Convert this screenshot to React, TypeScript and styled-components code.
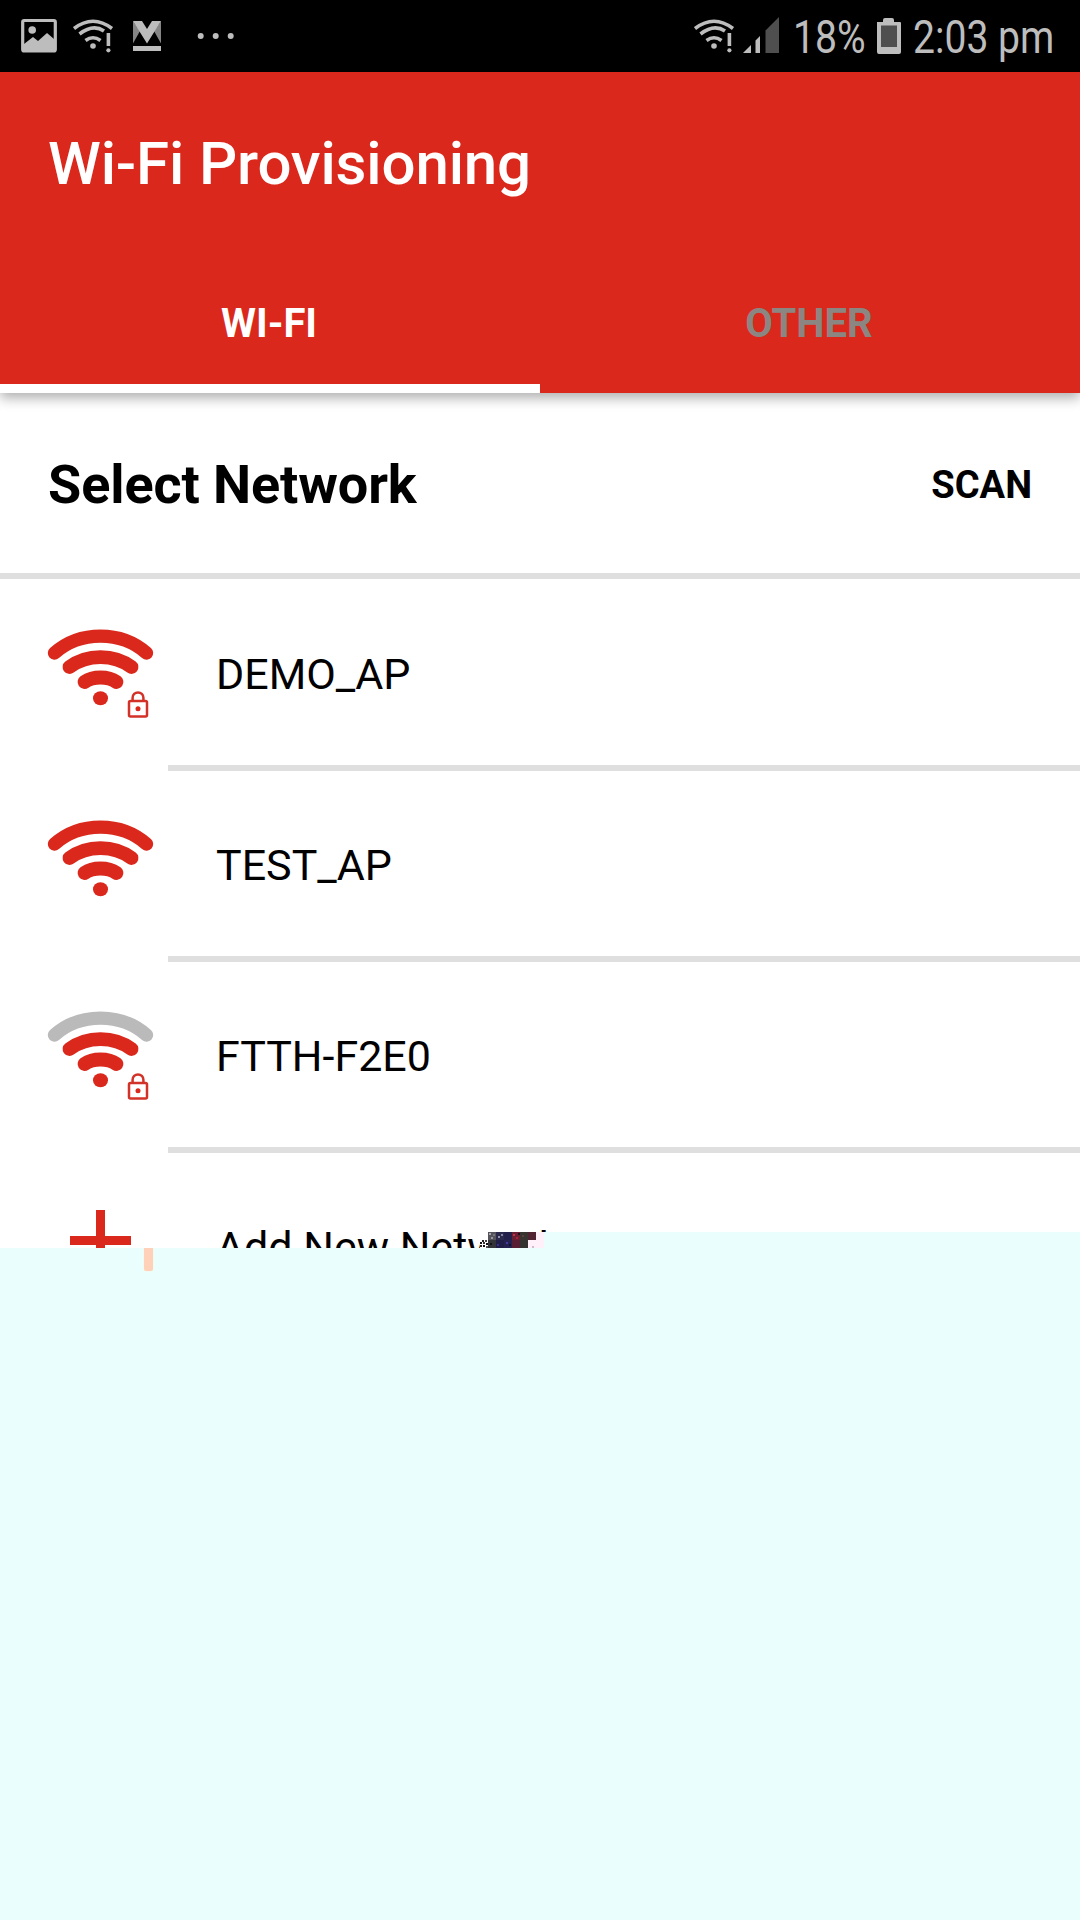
import React from "react";
import styled, { createGlobalStyle } from "styled-components";

const RED = "#da291c";
const MINT = "#eafffd";
const GREY = "#bdbdbd";

const GlobalStyle = createGlobalStyle`
  *, *::before, *::after { box-sizing: border-box; }
  body {
    margin: 0;
    background: ${MINT};
    font-family: Roboto, "Liberation Sans", sans-serif;
  }
`;

const Screen = styled.div`
  width: 1080px;
  height: 1920px;
  overflow: hidden;
  background: ${MINT};
`;

const StatusBar = styled.div`
  height: 72px;
  background: #000;
  display: flex;
  justify-content: space-between;
  color: ${GREY};
`;

const StatusGroup = styled.div`
  display: flex;
  svg { display: block; flex: none; }
`;

const StatusText = styled.span<{ $width: number; $squeeze: number }>`
  display: block;
  width: ${(p) => p.$width}px;
  font-size: 46px;
  line-height: 75px;
  white-space: nowrap;
  transform: scaleX(${(p) => p.$squeeze});
  transform-origin: 0 50%;
`;

const Header = styled.header`
  position: relative;
  z-index: 1;
  height: 321px;
  background: ${RED};
  box-shadow: 0 5px 12px rgba(0, 0, 0, 0.32);
  display: flex;
  flex-direction: column;
`;

const Title = styled.h1`
  margin: 0;
  height: 177px;
  padding: 0 48px;
  font-size: 60px;
  line-height: 183px;
  letter-spacing: -0.14px;
  font-weight: 500;
  color: #fff;
`;

const Tabs = styled.nav`
  flex: 1;
  display: flex;
`;

const Tab = styled.div<{ $active?: boolean }>`
  flex: none;
  width: 50%;
  text-align: center;
  font-size: 40px;
  line-height: 150px;
  height: 144px;
  padding-right: 2px;
  font-weight: 700;
  color: ${(p) => (p.$active ? "#fff" : "#8c8683")};
  border-bottom: 9px solid ${(p) => (p.$active ? "#fff" : "transparent")};
`;

const SectionHead = styled.div`
  height: 186px;
  padding: 4px 48px 0;
  display: flex;
  justify-content: space-between;
  align-items: center;
  background: #fff;
  border-bottom: 6px solid #dfdfdf;
`;

const SectionTitle = styled.h2`
  margin: 0;
  font-size: 54px;
  line-height: 64px;
  letter-spacing: -0.1px;
  font-weight: 700;
  color: #000;
`;

const ScanButton = styled.button`
  border: 0;
  padding: 0;
  background: none;
  font: 700 38.1px/46px Roboto, sans-serif;
  color: #000;
`;

const List = styled.div`
  position: relative;
  height: 669px;
  overflow: hidden;
  background: #fff;
`;

const Row = styled.div<{ $first?: boolean }>`
  height: ${(p) => (p.$first ? 192 : 191)}px;
  line-height: ${(p) => (p.$first ? 190 : 188)}px;
  display: flex;
`;

const IconCell = styled.div<{ $first?: boolean }>`
  width: 168px;
  flex: none;
  padding: ${(p) => (p.$first ? 46 : 45)}px 0 0 40px;
  svg { display: block; }
`;

const NameCell = styled.div<{ $last?: boolean }>`
  flex: 1;
  padding-left: 48px;
  font-size: 43px;
  white-space: nowrap;
  color: #000;
  border-bottom: ${(p) => (p.$last ? 0 : 6)}px solid #dfdfdf;
`;

const Glitch = styled.svg`
  position: absolute;
  left: 464px;
  top: 653px;
  display: block;
`;

const Remainder = styled.div`
  height: 672px;
  padding-left: 144px;
`;

const Peach = styled.div`
  width: 9px;
  height: 23px;
  background: #ffd1b8;
  border-radius: 0 0 2px 2px;
  box-shadow: 0 0 2px #fff0d5;
`;

const StatusWifi = ({ width }: { width: number }) => (
  <svg width={width} height="72" viewBox={`0 0 ${width} 72`} fill="none" stroke={GREY} strokeWidth="3.6">
    <path d="M1 28.5Q20 14 39 28.5" />
    <path d="M6.5 34Q20 23.5 31 31" />
    <path d="M12.5 40.5Q20 35 27.5 40.5" />
    <circle cx="20" cy="46" r="2.8" fill={GREY} stroke="none" />
    <path d="M35.4 33V46" />
    <circle cx="35.4" cy="50.3" r="2.1" fill={GREY} stroke="none" />
  </svg>
);

const WifiIcon = ({ weak, locked }: { weak?: boolean; locked?: boolean }) => (
  <svg width="120" height="100" viewBox="0 0 120 100" fill="none" strokeLinecap="round">
    <path d="M14.5 28C40 5.5 81 5.5 106.5 28" stroke={weak ? "#bababa" : RED} strokeWidth="13.4" />
    <path d="M29.5 42C47 28.7 74 28.7 91.5 42" stroke={RED} strokeWidth="13.8" />
    <path d="M44.5 57C53 51 68 51 76.5 57" stroke={RED} strokeWidth="13.8" />
    <ellipse cx="60.5" cy="73.3" rx="7.5" ry="7" fill={RED} />
    {locked && (
      <g stroke="#d23227" strokeWidth="2.5" strokeLinecap="butt">
        <rect x="89" y="76" width="18" height="15.6" rx="1.5" />
        <path d="M92.6 76V72.8a5.4 5.4 0 0 1 10.8 0V76" />
        <circle cx="98" cy="83.7" r="2.5" fill={RED} stroke="none" />
      </g>
    )}
  </svg>
);

const networks = [
  { name: "DEMO_AP", locked: true, weak: false },
  { name: "TEST_AP", locked: false, weak: false },
  { name: "FTTH-F2E0", locked: true, weak: true },
];

const blocks: [number, number, number, number, string][] = [
  [24, 0, 8, 8, "#55535c"], [32, 0, 8, 8, "#2c2a4c"], [40, 0, 8, 8, "#23204b"],
  [48, 0, 8, 8, "#6b1f32"], [56, 0, 8, 8, "#393632"], [64, 0, 8, 8, "#522331"],
  [24, 8, 8, 8, "#33333a"], [32, 8, 8, 8, "#201d48"], [40, 8, 8, 8, "#252052"],
  [48, 8, 8, 8, "#571d32"], [56, 8, 8, 8, "#333331"],
  [72, 0, 8, 8, "#fff0fa"], [64, 8, 16, 8, "#fff0fa"],
];

const specks: [number, number, string][] = [
  [25, 1, "#aaa"], [29, 2, "#777"], [27, 5, "#999"], [34, 4, "#9993aa"], [37, 2, "#8784a3"],
  [49, 2, "#c43245"], [52, 5, "#aa2240"], [54, 1, "#210c21"], [42, 10, "#4039a0"], [45, 12, "#111035"],
  [33, 12, "#38318c"], [58, 3, "#5c403c"], [26, 11, "#121219"], [68, 14, "#d5bbd0"],
  [18, 8, "#222"], [21, 8, "#444"], [16, 10, "#111"], [19, 10, "#333"], [22, 11, "#111"],
  [16, 13, "#222"], [19, 13, "#111"], [22, 14, "#555"],
];

export default function App() {
  return (
    <Screen>
      <GlobalStyle />
      <StatusBar>
        <StatusGroup>
          <svg width="73" height="72" viewBox="0 0 73 72">
            <rect x="22.7" y="20.5" width="32.6" height="30.5" rx="1.5" fill="none" stroke={GREY} strokeWidth="3.2" />
            <circle cx="32.2" cy="30" r="3.8" fill={GREY} />
            <path d="M24 44L33 37L38 41L47 33L54 39V51H24Z" fill={GREY} />
          </svg>
          <StatusWifi width={60} />
          <svg width="110" height="72" viewBox="0 0 110 72">
            <path d="M0 21V43.5L7 31Z M28 21V43.5L21 31Z" fill="#858585" />
            <path d="M0 21H9L14 29L19 21H28L14 43.5Z" fill={GREY} />
            <rect y="46" width="28" height="5" fill={GREY} />
            <g fill={GREY}>
              <circle cx="67.7" cy="36" r="3" /><circle cx="82.7" cy="36" r="3" /><circle cx="97.7" cy="36" r="3" />
            </g>
          </svg>
        </StatusGroup>
        <StatusGroup>
          <StatusWifi width={49} />
          <svg width="50" height="72" viewBox="0 0 50 72">
            <path d="M0 53L8 45V53Z M12.5 40.5L17 36V53H12.5Z" fill={GREY} />
            <path d="M22.5 30.5L36 17V53H22.5Z" fill="#4f4f4f" />
          </svg>
          <StatusText $width={83} $squeeze={0.85}>18%</StatusText>
          <svg width="37" height="72" viewBox="0 0 37 72">
            <path d="M1 22H7V20Q7 18 9 18H16Q18 18 18 20V22H24Q25 22 25 23V52Q25 54 23 54H3Q1 54 1 52Z" fill={GREY} />
            <rect x="5" y="25.5" width="16" height="21.5" fill="#4f4f4f" />
          </svg>
          <StatusText $width={167} $squeeze={0.85}>2:03 pm</StatusText>
        </StatusGroup>
      </StatusBar>
      <Header>
        <Title>Wi-Fi Provisioning</Title>
        <Tabs>
          <Tab $active>WI-FI</Tab>
          <Tab>OTHER</Tab>
        </Tabs>
      </Header>
      <SectionHead>
        <SectionTitle>Select Network</SectionTitle>
        <ScanButton>SCAN</ScanButton>
      </SectionHead>
      <List>
        {networks.map((n, i) => (
          <Row key={n.name} $first={i === 0}>
            <IconCell $first={i === 0}>
              <WifiIcon weak={n.weak} locked={n.locked} />
            </IconCell>
            <NameCell>{n.name}</NameCell>
          </Row>
        ))}
        <Row>
          <IconCell>
            <svg width="120" height="100" viewBox="0 0 120 100">
              <path d="M56 12H65V38H91V47H65V72H56V47H30V38H56Z" fill={RED} />
            </svg>
          </IconCell>
          <NameCell $last>Add New Network</NameCell>
        </Row>
        <Glitch width="616" height="16" viewBox="0 0 616 16" shapeRendering="crispEdges">
          <rect x="16" width="8" height="16" fill="#fff" />
          <rect x="64" width="552" height="16" fill={MINT} />
          {blocks.map(([x, y, w, h, c], i) => <rect key={i} x={x} y={y} width={w} height={h} fill={c} />)}
          {specks.map(([x, y, c], i) => <rect key={i} x={x} y={y} width="2" height="2" fill={c} />)}
        </Glitch>
      </List>
      <Remainder>
        <Peach />
      </Remainder>
    </Screen>
  );
}
